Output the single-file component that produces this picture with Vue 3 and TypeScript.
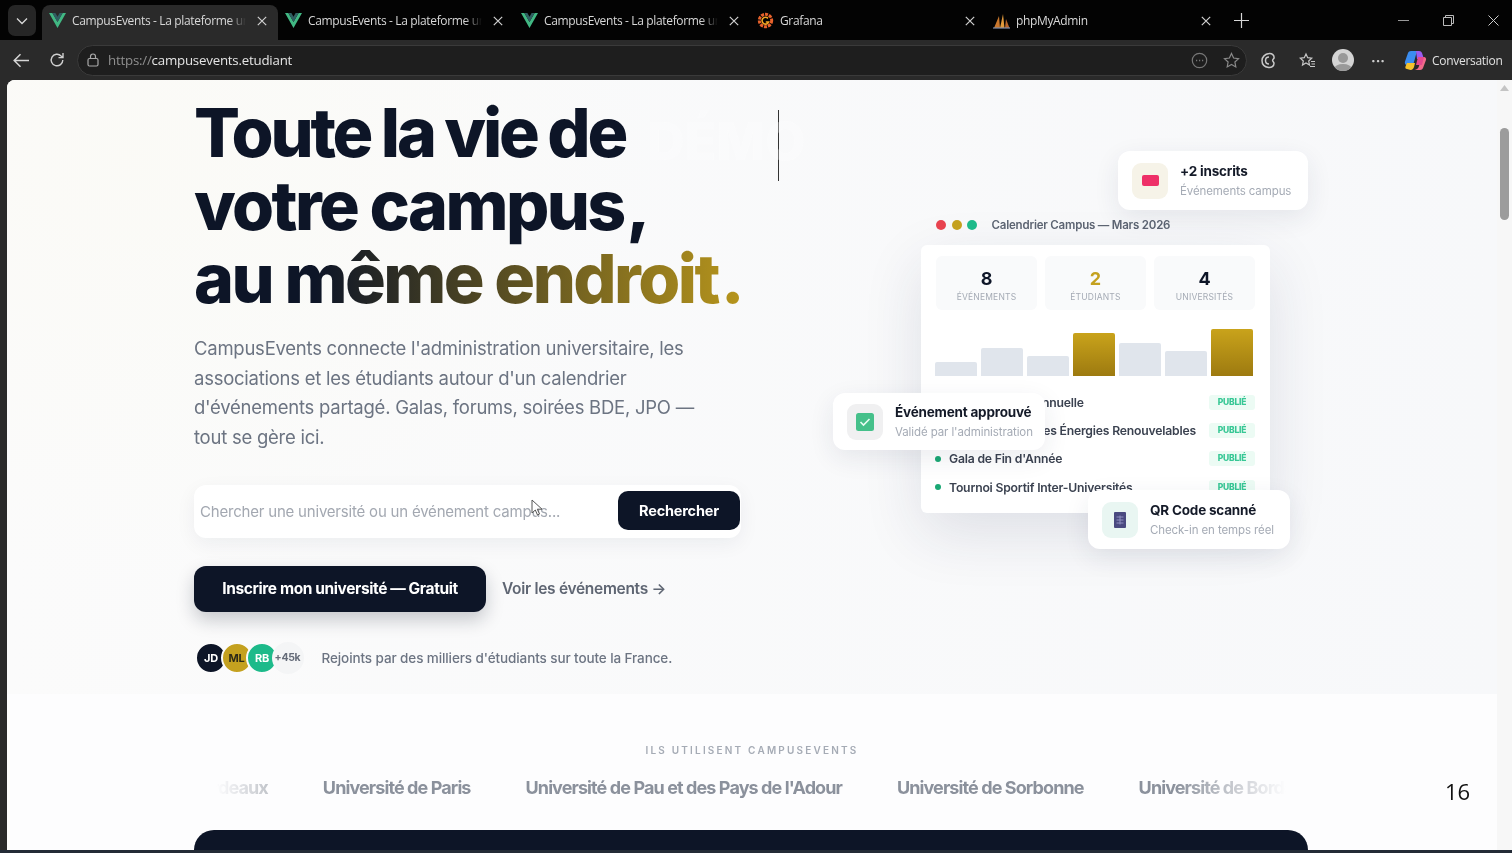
<script setup lang="ts">
const tabs = [
  { title: 'CampusEvents - La plateforme universitaire', icon: 'vue', active: true },
  { title: 'CampusEvents - La plateforme universitaire', icon: 'vue', active: false },
  { title: 'CampusEvents - La plateforme universitaire', icon: 'vue', active: false },
  { title: 'Grafana', icon: 'grafana', active: false },
  { title: 'phpMyAdmin', icon: 'pma', active: false },
];

const stats = [
  { value: '8', label: 'Événements', gold: false },
  { value: '2', label: 'Étudiants', gold: true },
  { value: '4', label: 'Universités', gold: false },
];

const bars = [
  { h: 14, gold: false },
  { h: 28, gold: false },
  { h: 20, gold: false },
  { h: 43, gold: true },
  { h: 33, gold: false },
  { h: 25, gold: false },
  { h: 47, gold: true },
];

const events = [
  'Fête Étudiante Annuelle',
  'Conférence sur les Énergies Renouvelables',
  'Gala de Fin d\'Année',
  'Tournoi Sportif Inter-Universités',
];

const partners = [
  'Université de Bordeaux',
  'Université de Paris',
  'Université de Pau et des Pays de l\'Adour',
  'Université de Sorbonne',
  'Université de Bordeaux',
];
</script>

<template>
  <div class="browser">
    <header class="tabbar">
      <button class="tab-list">
        <svg width="12" height="8" viewBox="0 0 12 8"><path d="M1 1.5l5 5 5-5" fill="none" stroke="#d8d8d8" stroke-width="1.3" /></svg>
      </button>
      <div v-for="(tab, i) in tabs" :key="i" class="tab" :class="{ active: tab.active }">
        <svg v-if="tab.icon === 'vue'" class="fav" width="17" height="15" viewBox="0 0 17 15">
          <path d="M0 0h3.4l5.1 9 5.1-9H17L8.5 15z" fill="#41b883" />
          <path d="M3.4 0h3l2.1 3.7L10.6 0h3L8.5 9z" fill="#2f5f62" />
        </svg>
        <svg v-else-if="tab.icon === 'grafana'" class="fav" width="17" height="17" viewBox="0 0 17 17">
          <circle cx="8.5" cy="8.5" r="6.2" fill="none" stroke="#e8622c" stroke-width="3" stroke-dasharray="3 1" />
          <path d="M11 6.4A3.4 3.4 0 1 0 11.6 10H8.8" fill="none" stroke="#f5a623" stroke-width="1.6" />
        </svg>
        <svg v-else class="fav" width="17" height="16" viewBox="0 0 17 16">
          <path d="M1 15L6 3l1 12z" fill="#c9772c" />
          <path d="M7 15L10 1l1.5 14z" fill="#e29a3c" />
          <path d="M12 15l1-9 3.5 9z" fill="#b9652a" />
          <path d="M0 15h17" stroke="#7c8aa8" stroke-width="1.2" />
        </svg>
        <span class="tab-title">{{ tab.title }}</span>
        <svg class="tab-close" width="10" height="10" viewBox="0 0 10 10"><path d="M.8.8l8.4 8.4M9.2.8L.8 9.2" stroke="#d0d0d0" stroke-width="1.2" /></svg>
      </div>
      <svg class="new-tab" width="15" height="15" viewBox="0 0 15 15"><path d="M7.5 0v15M0 7.5h15" stroke="#d8d8d8" stroke-width="1.2" /></svg>
      <div class="win-controls">
        <svg width="11" height="11" viewBox="0 0 11 11"><path d="M0 5.5h11" stroke="#999" stroke-width="1" /></svg>
        <svg width="11" height="11" viewBox="0 0 11 11"><path d="M.5 2.5h8v8h-8zM2.5 2.5v-2h8v8h-2" fill="none" stroke="#bbb" stroke-width="1" /></svg>
        <svg width="11" height="11" viewBox="0 0 11 11"><path d="M.5.5l10 10M10.5.5l-10 10" stroke="#ccc" stroke-width="1" /></svg>
      </div>
    </header>

    <div class="toolbar">
      <svg class="tool-icon" width="17" height="15" viewBox="0 0 17 15"><path d="M16 7.5H1.5M7.5 1.2L1.2 7.5l6.3 6.3" fill="none" stroke="#d6d6d6" stroke-width="1.5" /></svg>
      <svg class="tool-icon" width="16" height="16" viewBox="0 0 16 16"><path d="M13.8 8a5.8 5.8 0 1 1-1.7-4.1L14 5.6M14 1v4.6H9.5" fill="none" stroke="#d0d0d0" stroke-width="1.4" /></svg>
      <div class="omnibox">
        <svg width="12" height="14" viewBox="0 0 12 14"><rect x="1" y="5.5" width="10" height="7.5" rx="1.5" fill="none" stroke="#a9a9a9" stroke-width="1.2" /><path d="M3.5 5.5V3.5a2.5 2.5 0 0 1 5 0v2" fill="none" stroke="#a9a9a9" stroke-width="1.2" /></svg>
        <span class="url"><span class="url-scheme">https://</span>campusevents.etudiant</span>
        <span class="omni-icons">
          <svg width="17" height="17" viewBox="0 0 17 17"><circle cx="8.5" cy="8.5" r="7.2" fill="none" stroke="#777" stroke-width="1.2" /><path d="M5 8.5h1.2M8 8.5h1.2M11 8.5h1.2" stroke="#777" stroke-width="1.3" /></svg>
          <svg width="17" height="17" viewBox="0 0 17 17"><path d="M8.5 1.5l2.1 4.5 4.9.6-3.6 3.4.9 4.9-4.3-2.4-4.3 2.4.9-4.9L1.5 6.6l4.9-.6z" fill="none" stroke="#8a8a8a" stroke-width="1.2" /></svg>
        </span>
      </div>
      <div class="tool-right">
        <svg width="16" height="17" viewBox="0 0 16 17"><path d="M9 1.500C12 1 14.500 3.400 14 6c-.2 1-1.400 1.300-1.400 2.500S14 10 14 11.500c0 2.500-2.600 4.400-5.400 4C5 15 2 12.600 2 8.500 2 5 5 2 9 1.500zM9 5c-2 0-3.500 1.500-3.500 3.500S7 12 9 12" fill="none" stroke="#c8c8c8" stroke-width="1.500" /></svg>
        <svg width="17" height="17" viewBox="0 0 17 17"><path d="M7 2l1.700 3.700 4 .5-3 2.800.8 4L7 11l-3.500 2 .8-4-3-2.800 4-.5zM12 9.500h4M12.500 12h3.500M11 14.500h5" fill="none" stroke="#c8c8c8" stroke-width="1.200" /></svg>
        <span class="avatar-user"><span class="avatar-head"></span><span class="avatar-body"></span></span>
        <span class="more">···</span>
        <svg width="23" height="23" viewBox="0 0 23 23">
          <path d="M7 2h6l-3 11c-.5 2-1.500 3-3 3H3C1 16 .5 14 1 12.500L4 4c.4-1.300 1.500-2 3-2z" fill="#3b8df0" />
          <path d="M12 2h3c1.500 0 2.600.8 3 2l2 6h-7z" fill="#9a5cf0" />
          <path d="M9 21h7c1.500 0 2.500-.8 3-2l3-8c.5-1.500-.5-3-2-3h-2l-3 9c-.5 2-2 4-6 4z" fill="#f06a8a" />
          <path d="M3 20c-1.500 0-2-1-1.500-2.500L3 14h8l-1 4c-.4 1.500-1.500 3-3.500 3z" fill="#f5c22c" />
          <path d="M14 8h6l-2 8h-6z" fill="#e4488f" />
        </svg>
        <span class="conversation">Conversation</span>
      </div>
    </div>

    <div class="viewport">
      <main class="page">
        <section class="hero">
          <div class="hero-inner">
            <div class="hero-left">
              <h1 class="headline">
                <span class="line line-1">Toute la vie de</span>
                <span class="line line-2">votre campus<span class="comma"> ,</span></span>
                <span class="line line-3"><span class="accent">au même endroit<span class="comma"> .</span></span></span>
              </h1>
              <p class="lead">CampusEvents connecte l'administration universitaire, les associations et les étudiants autour d'un calendrier d'événements partagé. Galas, forums, soirées BDE, JPO — tout se gère ici.</p>

              <div class="search">
                <span class="placeholder">Chercher une université ou un événement campus...</span>
                <button class="search-btn">Rechercher</button>
                <svg class="cursor" width="12" height="18" viewBox="0 0 12 18"><path d="M1 1v13l3.300-3 2.200 5 2-1-2.200-4.800H11z" fill="#fff" stroke="#555" stroke-width="1" /></svg>
              </div>

              <div class="cta-row">
                <button class="cta">Inscrire mon université — Gratuit</button>
                <a class="cta-link">Voir les événements →</a>
              </div>

              <div class="social">
                <div class="avatars">
                  <span class="av av-navy">JD</span>
                  <span class="av av-gold">ML</span>
                  <span class="av av-green">RB</span>
                  <span class="av av-more">+45k</span>
                </div>
                <span class="social-text">Rejoints par des milliers d'étudiants sur toute la France.</span>
              </div>
            </div>

            <div class="hero-right">
              <div class="mock">
                <div class="mock-title">
                  <i class="dot red"></i><i class="dot gold"></i><i class="dot green"></i>
                  <span>Calendrier Campus — Mars 2026</span>
                </div>
                <div class="mock-panel">
                  <div class="stats">
                    <div v-for="s in stats" :key="s.label" class="stat">
                      <b :class="{ 'gold-text': s.gold }">{{ s.value }}</b>
                      <small>{{ s.label }}</small>
                    </div>
                  </div>
                  <div class="bars">
                    <div v-for="(b, i) in bars" :key="i" class="bar" :class="{ 'bar-gold': b.gold }" :style="{ height: b.h + 'px' }"></div>
                  </div>
                  <ul class="events">
                    <li v-for="e in events" :key="e">
                      <i class="event-dot"></i>
                      <span>{{ e }}</span>
                      <em>Publié</em>
                    </li>
                  </ul>
                </div>

                <div class="float float-inscrits">
                  <span class="float-icon cream"><i class="ticket"></i></span>
                  <div><b>+2 inscrits</b><small>Événements campus</small></div>
                </div>
                <div class="float float-approved">
                  <span class="float-icon grey">
                    <svg width="18" height="18" viewBox="0 0 18 18"><rect width="18" height="18" rx="2.500" fill="#45c08a" /><path d="M4.500 9l3 3 6-6" fill="none" stroke="#e8fbf1" stroke-width="1.600" /></svg>
                  </span>
                  <div><b>Événement approuvé</b><small>Validé par l'administration</small></div>
                </div>
                <div class="float float-qr">
                  <span class="float-icon mint">
                    <svg width="12" height="16" viewBox="0 0 12 16"><rect width="12" height="16" rx="1" fill="#4a4a80" /><path d="M2.500 5h7M2.500 8h7M2.500 11h7M6 3.500v9" stroke="#8f8fc0" stroke-width="1" /></svg>
                  </span>
                  <div><b>QR Code scanné</b><small>Check-in en temps réel</small></div>
                </div>
              </div>
            </div>
          </div>
          <div class="caret"></div>
          <div class="ghost">DÉMO</div>
        </section>

        <section class="partners">
          <p class="partners-label">ILS UTILISENT CAMPUSEVENTS</p>
          <div class="marquee">
            <div class="marquee-track">
              <span v-for="(p, i) in partners" :key="i">{{ p }}</span>
            </div>
          </div>
        </section>

        <div class="dark-band"></div>
        <span class="page-number">16</span>
      </main>

      <aside class="scrollbar">
        <svg width="9" height="6" viewBox="0 0 9 6"><path d="M4.500 0L9 6H0z" fill="#c4c4c4" /></svg>
        <div class="thumb"></div>
      </aside>
    </div>
    <div class="statusline"></div>
  </div>
</template>

<style>
html,
body {
  margin: 0;
  background: #242424;
}
</style>

<style scoped>
* {
  box-sizing: border-box;
}

.browser {
  width: 1512px;
  height: 853px;
  overflow: hidden;
  display: flex;
  flex-direction: column;
  background: #2a2a2a;
  font-family: Inter, "Liberation Sans", sans-serif;
  filter: blur(0.45px);
}

/* tabs */
.tabbar {
  height: 40px;
  flex: none;
  display: flex;
  align-items: flex-end;
  background: #030303;
  padding-left: 8px;
}

.tab-list {
  width: 28px;
  height: 31px;
  margin: 0 6px 4px 0;
  border: 0;
  border-radius: 7px;
  background: #262626;
  display: flex;
  align-items: center;
  justify-content: center;
}

.tab {
  width: 236px;
  height: 35px;
  flex: none;
  display: flex;
  align-items: center;
  gap: 6px;
  padding: 0 11px 4px 7px;
  color: #d8d8d8;
  font-family: "Open Sans", sans-serif;
  font-size: 12px;
  letter-spacing: -0.35px;
}

.tab.active {
  background: #2a2a2a;
  border-radius: 8px 8px 0 0;
}

.fav {
  flex: none;
}

.tab-title {
  flex: 1;
  overflow: hidden;
  white-space: nowrap;
  -webkit-mask-image: linear-gradient(90deg, #000 90%, transparent);
  mask-image: linear-gradient(90deg, #000 90%, transparent);
}

.tab-close {
  flex: none;
  margin-left: 5px;
}

.new-tab {
  margin: 0 0 12px 12px;
}

.win-controls {
  margin-left: auto;
  display: flex;
  gap: 34px;
  padding: 0 13px 14px 0;
}

/* toolbar */
.toolbar {
  height: 40px;
  flex: none;
  display: flex;
  align-items: center;
  padding-left: 13px;
  background: #2a2a2a;
  color: #d8d8d8;
}

.tool-icon {
  margin-right: 19px;
}

.omnibox {
  width: 1170px;
  height: 31px;
  margin-left: -7px;
  display: flex;
  align-items: center;
  gap: 9px;
  padding: 0 6px 0 9px;
  background: #1e1e1e;
  border-radius: 16px;
  border: 1px solid #3a3a3a;
}

.url {
  font-family: "Open Sans", sans-serif;
  font-size: 13.300px;
  letter-spacing: -0.220px;
  color: #e4e4e4;
}

.url-scheme {
  color: #8f8f8f;
}

.omni-icons {
  margin-left: auto;
  display: flex;
  gap: 15px;
}

.tool-right {
  display: flex;
  align-items: center;
  flex: 1;
  padding-left: 13px;
  gap: 0;
}

.tool-right svg:nth-child(2) {
  margin-left: 23px;
}

.avatar-user {
  width: 22px;
  height: 22px;
  margin-left: 16px;
  border-radius: 50%;
  background: #d4d4d4;
  overflow: hidden;
  display: flex;
  flex-direction: column;
  align-items: center;
}

.avatar-head {
  width: 10px;
  height: 10px;
  margin-top: 4px;
  border-radius: 50%;
  background: #999;
  flex: none;
}

.avatar-body {
  width: 18px;
  height: 10px;
  margin-top: 1px;
  border-radius: 50%;
  background: #999;
  flex: none;
}

.more {
  margin: 0 19px 0 17px;
  font-size: 14px;
  font-weight: 700;
  color: #ccc;
}

.conversation {
  margin-left: 5px;
  font-family: "Open Sans", sans-serif;
  font-size: 12px;
  letter-spacing: -0.300px;
  color: #e0e0e0;
  white-space: nowrap;
}

/* viewport */
.viewport {
  height: 770px;
  flex: none;
  display: flex;
  padding-left: 7px;
}

.page {
  position: relative;
  width: 1490px;
  flex: none;
  background: #fdfdfe;
  border-radius: 8px 0 0 0;
  overflow: hidden;
  display: flex;
  flex-direction: column;
}

.scrollbar {
  flex: 1;
  background: #f7f7f7;
  display: flex;
  flex-direction: column;
  align-items: center;
  padding-top: 5px;
}

.thumb {
  width: 9px;
  height: 92px;
  margin-top: 37px;
  border-radius: 5px;
  background: #9c9c9c;
}

.statusline {
  flex: 1;
  background: #232b36;
}

/* hero */
.hero {
  position: relative;
  height: 614px;
  flex: none;
  padding: 16px 188px 0 187px;
  background:
    radial-gradient(ellipse 520px 420px at 120px 80px, rgba(251, 250, 245, 0.8), transparent),
    linear-gradient(90deg, #fbfbfb, #f7f8fa);
}

.hero-inner {
  display: grid;
  grid-template-columns: 547px 1fr;
}

.headline {
  margin: 0;
  font-size: 68px;
  line-height: 73px;
  font-weight: 800;
  color: #0d1527;
  white-space: nowrap;
}

.line {
  display: block;
}

.line-1 {
  letter-spacing: -3.200px;
  word-spacing: -1px;
}

.line-2 {
  letter-spacing: -2.600px;
}

.line-3 {
  letter-spacing: -2.550px;
}

.comma {
  letter-spacing: 0;
  margin-left: -12px;
}

.accent {
  background: linear-gradient(90deg, #0d1527 0%, #0d1527 22%, #b8961c 100%);
  -webkit-background-clip: text;
  background-clip: text;
  color: transparent;
}

.lead {
  margin: 19px 0 0;
  width: 530px;
  font-size: 18.500px;
  line-height: 29.700px;
  letter-spacing: -0.250px;
  color: #6c7482;
}

.search {
  position: relative;
  height: 53px;
  margin-top: 32px;
  display: flex;
  align-items: center;
  justify-content: space-between;
  padding: 0 1px 0 6px;
  background: #fff;
  border-radius: 12px;
  box-shadow: 0 6px 20px rgba(20, 30, 60, 0.06);
}

.placeholder {
  font-size: 15px;
  letter-spacing: -0.200px;
  color: #a3a8b1;
}

.search-btn {
  width: 122px;
  height: 39px;
  margin-top: -1px;
  border: 0;
  border-radius: 10px;
  background: #0d1527;
  color: #fff;
  font-family: inherit;
  font-size: 14.500px;
  font-weight: 700;
  letter-spacing: -0.200px;
}

.cursor {
  position: absolute;
  left: 337px;
  top: 14px;
}

.cta-row {
  margin-top: 28px;
  display: flex;
  align-items: center;
  gap: 16px;
}

.cta {
  width: 292px;
  height: 46px;
  border: 0;
  border-radius: 12px;
  background: #0d1527;
  color: #fff;
  font-family: inherit;
  font-size: 15.500px;
  font-weight: 700;
  letter-spacing: -0.400px;
  box-shadow: 0 8px 18px rgba(13, 21, 39, 0.22);
}

.cta-link {
  font-size: 15.500px;
  font-weight: 600;
  letter-spacing: -0.300px;
  color: #5f6673;
}

.social {
  margin-top: 30px;
  display: flex;
  align-items: center;
  gap: 18px;
  padding-left: 1px;
}

.avatars {
  display: flex;
}

.av {
  width: 32px;
  height: 32px;
  margin-right: -6.500px;
  border-radius: 50%;
  border: 2px solid #fbfbfb;
  display: flex;
  align-items: center;
  justify-content: center;
  font-size: 11px;
  font-weight: 700;
  letter-spacing: -0.300px;
  color: #fff;
}

.av-navy {
  background: #0d1527;
}

.av-gold {
  background: #c4a11f;
  color: #2c2a18;
}

.av-green {
  background: #1dba8a;
}

.av-more {
  background: #f4f5f6;
  color: #656c79;
  font-size: 10.500px;
  margin-right: 0;
  width: 32px;
  border-color: transparent;
}

.social-text {
  font-size: 13.500px;
  font-weight: 500;
  letter-spacing: -0.100px;
  color: #6c7482;
}

/* mock */
.hero-right {
  position: relative;
}

.mock {
  position: relative;
  width: 349px;
  margin: 114px 0 0 180px;
}

.mock-title {
  height: 35px;
  padding: 0 0 6px 15px;
  display: flex;
  align-items: center;
  gap: 5.500px;
  font-size: 11.500px;
  font-weight: 600;
  letter-spacing: -0.200px;
  color: #5c6472;
}

.mock-title span {
  margin-left: 9px;
}

.dot {
  width: 10px;
  height: 10px;
  border-radius: 50%;
}

.red {
  background: #e8434f;
}

.gold {
  background: #c4a11f;
}

.green {
  background: #1dba8a;
}

.mock-panel {
  height: 268px;
  padding: 11px 15px 0 15px;
  background: #fff;
  border-radius: 6px;
  box-shadow: 0 20px 60px rgba(30, 45, 80, 0.12);
  overflow: hidden;
}

.stats {
  display: grid;
  grid-template-columns: repeat(3, 1fr);
  gap: 8px;
}

.stat {
  height: 54px;
  padding-top: 5px;
  display: flex;
  flex-direction: column;
  align-items: center;
  justify-content: center;
  background: #f9fafb;
  border-radius: 6px;
}

.stat b {
  font-size: 18px;
  line-height: 22px;
  font-weight: 700;
  color: #0d1527;
}

.stat b.gold-text {
  color: #c4a11f;
}

.stat small {
  font-size: 8.500px;
  line-height: 14px;
  letter-spacing: 0.200px;
  text-transform: uppercase;
  color: #a5abb5;
}

.bars {
  height: 48px;
  margin: 18px 0 0 -1px;
  display: flex;
  align-items: flex-end;
  gap: 4px;
}

.bar {
  width: 42px;
  flex: none;
  border-radius: 2px 2px 0 0;
  background: #e0e5ec;
}

.bar-gold {
  background: linear-gradient(180deg, #c9a31b, #9d7a10);
}

.events {
  margin: 12px 0 0;
  padding: 0;
  list-style: none;
}

.events li {
  height: 28.300px;
  display: flex;
  align-items: center;
  font-size: 12.200px;
  font-weight: 600;
  letter-spacing: -0.200px;
  color: #3b4250;
}

.event-dot {
  width: 6px;
  height: 6px;
  margin: 0 8px 0 -1px;
  border-radius: 50%;
  background: #1aa874;
}

.events em {
  margin-left: auto;
  width: 46px;
  height: 15px;
  border-radius: 3px;
  background: #ecfbf4;
  color: #37c795;
  font-style: normal;
  font-size: 8.500px;
  font-weight: 800;
  line-height: 15px;
  text-align: center;
  text-transform: uppercase;
}

.float {
  position: absolute;
  display: flex;
  align-items: center;
  gap: 12px;
  height: 59px;
  padding: 0 14px;
  background: #fff;
  border-radius: 12px;
  box-shadow: 0 8px 26px rgba(30, 45, 80, 0.09);
  white-space: nowrap;
}

.float b {
  display: block;
  font-size: 13.500px;
  line-height: 20px;
  font-weight: 700;
  letter-spacing: -0.200px;
  color: #141a28;
}

.float small {
  display: block;
  font-size: 11.500px;
  line-height: 20px;
  letter-spacing: -0.100px;
  color: #a5abb5;
}

.float-icon {
  width: 36px;
  height: 36px;
  flex: none;
  display: flex;
  align-items: center;
  justify-content: center;
  border-radius: 9px;
}

.cream {
  background: #f6f3e8;
}

.grey {
  background: #f0f0f1;
}

.mint {
  background: #e9f6f2;
}

.ticket {
  width: 17px;
  height: 11px;
  border-radius: 2px;
  background: #ee3068;
}

.float-inscrits {
  left: 197px;
  top: -59px;
  width: 190px;
}

.float-approved {
  left: -88px;
  top: 183px;
  width: 212px;
  height: 57px;
}

.float-qr {
  left: 167px;
  top: 280px;
  width: 202px;
}

.caret {
  position: absolute;
  left: 771px;
  top: 30px;
  width: 1px;
  height: 71px;
  background: #333;
}

.ghost {
  position: absolute;
  left: 640px;
  top: 30px;
  font-size: 52px;
  font-weight: 800;
  color: #fff;
  opacity: 0.3;
}

/* partners */
.partners {
  height: 136px;
  flex: none;
  padding-top: 50px;
}

.partners-label {
  margin: 0;
  text-align: center;
  font-size: 10px;
  line-height: 12px;
  font-weight: 600;
  letter-spacing: 2.200px;
  color: #a5abb5;
}

.marquee {
  width: 1114px;
  margin: 20px auto 0 187px;
  overflow: hidden;
  -webkit-mask-image: linear-gradient(90deg, transparent 2%, #000 11%, #000 88%, transparent 98%);
  mask-image: linear-gradient(90deg, transparent 2%, #000 11%, #000 88%, transparent 98%);
}

.marquee-track {
  display: flex;
  gap: 55px;
  margin-left: -111px;
  white-space: nowrap;
  font-size: 18px;
  line-height: 24px;
  font-weight: 700;
  letter-spacing: -0.900px;
  color: #8b919c;
}

.dark-band {
  flex: 1;
  width: 1114px;
  margin-left: 187px;
  background: #0d1527;
  border-radius: 24px 24px 0 0;
}

.page-number {
  position: absolute;
  left: 1438px;
  top: 698px;
  font-family: "Open Sans", sans-serif;
  font-size: 22px;
  line-height: 26px;
  color: #111;
}
</style>
